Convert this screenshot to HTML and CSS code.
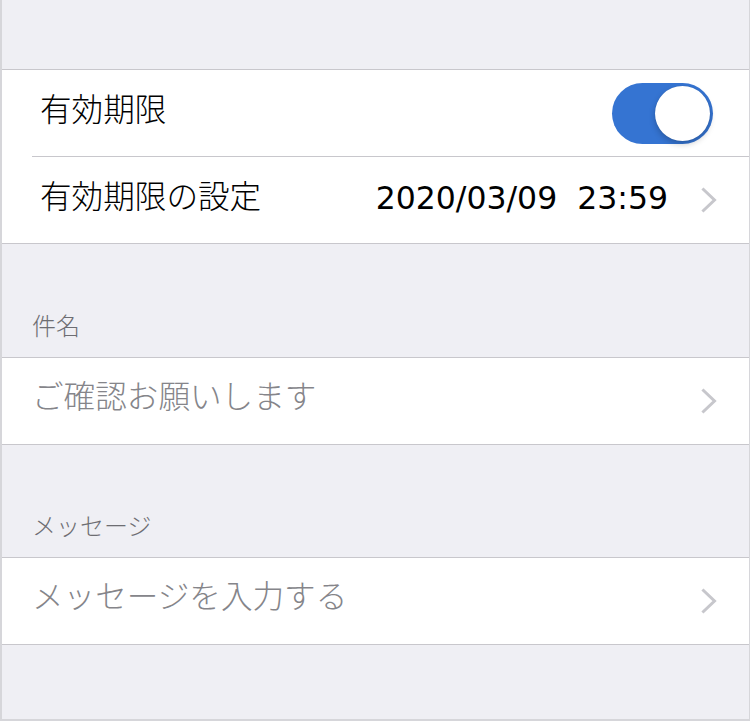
FILE: index.html
```html
<!DOCTYPE html>
<html lang="ja">
<head>
<meta charset="utf-8">
<title>設定</title>
<link rel="stylesheet" href="styles.css">
</head>
<body>
<div class="frame">
  <div class="top-gap"></div>
  <section class="group">
    <div class="row row-label">
      <span class="label">有効期限</span>
      <div class="toggle"><div class="knob"></div></div>
    </div>
    <div class="sep"></div>
    <div class="row row-label">
      <span class="label">有効期限の設定</span>
      <span class="value">2020/03/09  23:59</span>
      <svg class="chev" width="16" height="26" viewBox="0 0 16 26"><polyline points="2.5,2.5 13.5,13 2.5,23.5" fill="none" stroke="#c7c7cc" stroke-width="3" stroke-linecap="square"/></svg>
    </div>
  </section>

  <div class="header"><span>件名</span></div>
  <section class="group">
    <div class="row row-field">
      <span class="placeholder">ご確認お願いします</span>
      <svg class="chev" width="16" height="26" viewBox="0 0 16 26"><polyline points="2.5,2.5 13.5,13 2.5,23.5" fill="none" stroke="#c7c7cc" stroke-width="3" stroke-linecap="square"/></svg>
    </div>
  </section>

  <div class="header header-last"><span>メッセージ</span></div>
  <section class="group">
    <div class="row row-field">
      <span class="placeholder">メッセージを入力する</span>
      <svg class="chev" width="16" height="26" viewBox="0 0 16 26"><polyline points="2.5,2.5 13.5,13 2.5,23.5" fill="none" stroke="#c7c7cc" stroke-width="3" stroke-linecap="square"/></svg>
    </div>
  </section>
  <div class="fill"></div>
</div>
</body>
</html>
```

FILE: styles.css
```css
html, body {
  margin: 0;
  padding: 0;
  background: #efeff4;
}

body {
  font-family: "Noto Sans CJK JP", "Noto Sans", sans-serif;
}

.frame {
  box-sizing: border-box;
  height: 721px;
  display: flex;
  flex-direction: column;
  background: #efeff4;
  border-left: 2px solid #d6d6da;
  border-right: 1px solid #d6d6da;
  border-bottom: 2px solid #d6d6da;
}

.top-gap {
  height: 69px;
  flex: none;
}

.group {
  flex: none;
  background: #ffffff;
  border-top: 1px solid #c8c7cc;
  border-bottom: 1px solid #c8c7cc;
}

.row {
  height: 86px;
  display: flex;
  align-items: center;
}

.row-label {
  padding-left: 38px;
  padding-right: 32px;
}

.row-field {
  padding-left: 30px;
  padding-right: 32px;
}

.sep {
  height: 1px;
  margin-left: 30px;
  background: #c8c7cc;
}

.label {
  flex: 1;
  font-size: 31.6px;
  font-weight: 300;
  color: #000000;
  line-height: 1;
  padding-bottom: 10px;
}

.placeholder {
  flex: 1;
  font-size: 31.6px;
  font-weight: 300;
  color: #85858a;
  line-height: 1;
  padding-bottom: 12px;
}

.value {
  font-family: "DejaVu Sans", sans-serif;
  font-size: 31.5px;
  color: #000000;
  white-space: pre;
  margin-right: 33px;
  margin-top: -4px;
}

.chev {
  flex: none;
  display: block;
}

.toggle {
  flex: none;
  box-sizing: border-box;
  width: 101px;
  height: 61px;
  border-radius: 31px;
  background: #3574d2;
  padding: 3px;
  display: flex;
  justify-content: flex-end;
  margin-right: 4px;
}

.knob {
  width: 55px;
  height: 55px;
  border-radius: 50%;
  background: #ffffff;
  box-shadow: 0 3px 6px rgba(0, 0, 0, 0.22), 0 0 1px rgba(0, 0, 0, 0.15);
}

.header {
  flex: none;
  height: 113px;
  box-sizing: border-box;
  display: flex;
  align-items: flex-end;
  padding-left: 30px;
  padding-bottom: 20px;
  font-size: 24px;
  font-weight: 300;
  line-height: 24px;
  color: #6d6d72;
}

.header-last {
  height: 112px;
}

.fill {
  flex: 1;
}
```
